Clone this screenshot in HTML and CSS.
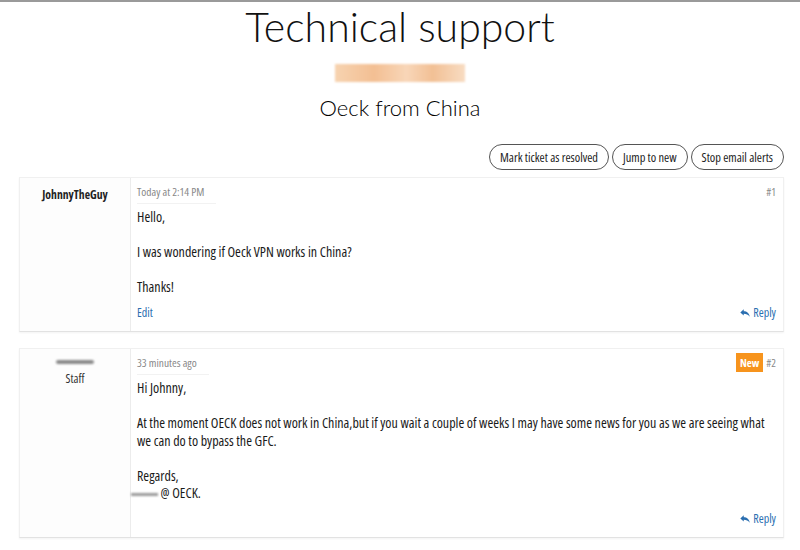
FILE: index.html
```html
<!DOCTYPE html>
<html lang="en">
<head>
  <meta charset="UTF-8" />
  <meta name="viewport" content="width=device-width, initial-scale=1.0" />
  <title>Technical support</title>
  <link rel="stylesheet" href="styles.css">
</head>
<body>
  <div class="page-head">
    <h1>Technical support</h1>
    <div class="redacted-bar"></div>
    <h2>Oeck from China</h2>
  </div>

  <div class="actions">
    <button type="button">Mark ticket as resolved</button>
    <button type="button">Jump to new</button>
    <button type="button">Stop email alerts</button>
  </div>

  <div class="post">
    <div class="post-user">
      <div class="username">JohnnyTheGuy</div>
    </div>
    <div class="post-main">
      <div class="post-meta">
        <span class="date">Today at 2:14 PM</span>
        <span class="num">#1</span>
      </div>
      <div class="post-body">
        <p>Hello,</p>
        <p>I was wondering if Oeck VPN works in China?</p>
        <p>Thanks!</p>
      </div>
      <div class="post-foot">
        <a href="#">Edit</a>
        <a href="#" class="reply"><svg viewBox="0 0 16 16" width="10" height="10"><path d="M6 2 0.5 7 6 12V9c4 0 7 1 9.5 5C15 8 11 5 6 5Z" fill="currentColor"/></svg>Reply</a>
      </div>
    </div>
  </div>

  <div class="post">
    <div class="post-user">
      <div class="redacted-name"></div>
      <div class="role">Staff</div>
    </div>
    <div class="post-main">
      <div class="post-meta">
        <span class="date">33 minutes ago</span>
        <span class="num"><span class="badge">New</span>#2</span>
      </div>
      <div class="post-body">
        <p>Hi Johnny,</p>
        <p>At the moment OECK does not work in China,but if you wait a couple of weeks I may have some news for you as we are seeing what we can do to bypass the GFC.</p>
        <p>Regards,<br><span class="redacted-sig"></span> @ OECK.</p>
      </div>
      <div class="post-foot">
        <span></span>
        <a href="#" class="reply"><svg viewBox="0 0 16 16" width="10" height="10"><path d="M6 2 0.5 7 6 12V9c4 0 7 1 9.5 5C15 8 11 5 6 5Z" fill="currentColor"/></svg>Reply</a>
      </div>
    </div>
  </div>
</body>
</html>
```

FILE: styles.css
```css
body { margin: 0; border-top: 2px solid #9a9a9a; background: #fff; color: #1a1a1a; font-family: "Open Sans", "Noto Sans", sans-serif; font-stretch: 85%; }

.page-head { text-align: center; font-family: Lato, sans-serif; font-stretch: normal; }
h1 { margin: 0; font-weight: 300; font-size: 41px; line-height: 50px; color: #111; }
.redacted-bar { width: 130px; height: 18px; margin: 12px auto 0; background: linear-gradient(90deg, #f7d3b0, #f3bf93 30%, #f8d6b8 55%, #f2c095 75%, #f8dcc2); filter: blur(1px); }
h2 { margin: 12px 0 0; font-weight: 300; font-size: 22px; line-height: 28px; color: #000; }

.actions { display: flex; justify-content: flex-end; gap: 3px; margin: 22px 16px 0 0; }
.actions button { height: 26px; padding: 0 10px; border: 1px solid #555; border-radius: 13px; background: #fff; font-family: inherit; font-stretch: inherit; font-size: 12.4px; color: #222; cursor: pointer; }

.post { display: flex; margin: 7px 16px 16px 19px; border: 1px solid #f0f0f0; border-bottom-color: #e2e2e2; box-shadow: 0 1px 2px rgba(0,0,0,0.05); }
.post-user { width: 110px; flex-shrink: 0; text-align: center; padding-top: 8px; font-size: 12px; background: #fdfdfd; }
.username { font-weight: 700; font-size: 11.7px; color: #222; }
.redacted-name { width: 38px; height: 4px; margin: 3px auto 6px; background: #8a8a8a; border-radius: 2px; filter: blur(1.2px); }
.role { color: #333; }

.post-main { flex: 1; border-left: 1px solid #ececec; padding: 0 7px 0 6px; display: flex; flex-direction: column; }
.post-meta { display: flex; justify-content: space-between; align-items: center; height: 26px; font-size: 11.4px; color: #888; }
.post-meta .date { border-bottom: 1px solid #f2f2f2; padding: 5px 12px 4px 0; }
.num { color: #888; font-size: 11px; }
.badge { display: inline-block; background: #f7941d; color: #fff; font-weight: 700; padding: 2px 4px; margin-right: 3px; font-size: 11px; }
.post-body { font-size: 14px; line-height: 17.5px; color: #1a1a1a; padding-top: 4px; }
.post-body p { margin: 0 0 17.5px; }
.redacted-sig { display: inline-block; width: 27px; height: 3px; background: #9a9a9a; vertical-align: middle; filter: blur(1px); margin-left: -6px; }
.post-foot { display: flex; justify-content: space-between; font-size: 12px; padding: 0 0 10px; margin-top: -9px; }
.post-foot a { color: #2a6eb0; text-decoration: none; }
.reply svg { margin-right: 3px; vertical-align: -1px; }
```
